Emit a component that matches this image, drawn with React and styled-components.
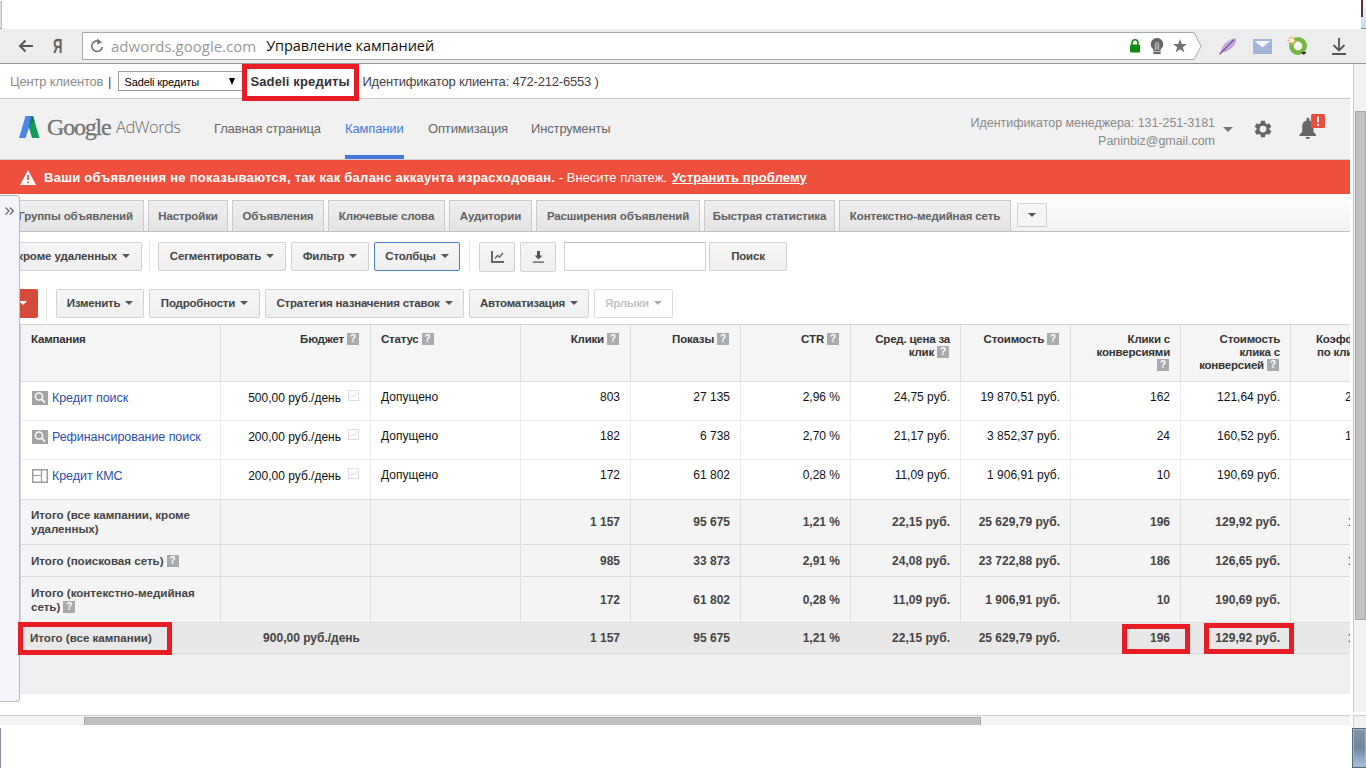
import React from "react";
import styled, { createGlobalStyle, css } from "styled-components";

const GlobalStyle = createGlobalStyle`
  * { box-sizing: border-box; }
  body {
    margin: 0;
    width: 1366px;
    height: 768px;
    overflow: hidden;
    background: #fff;
    font-family: "Liberation Sans", Arial, sans-serif;
    font-size: 12px;
    color: #000;
  }
`;

const Screen = styled.div`
  position: relative;
  width: 1366px;
  height: 768px;
  display: flex;
  flex-direction: column;
  overflow: hidden;
  background: #fff;
`;

const Label = styled.span`
  white-space: nowrap;
  letter-spacing: ${(p) => p.$ls || 0}px;
`;

/* browser chrome */

const TabStrip = styled.div`
  height: 29px;
  flex: none;
  display: flex;
  justify-content: space-between;
`;

const LeftSliver = styled.div`
  width: 2px;
  height: 28px;
  margin-top: 1px;
  background: #dde0e4;
  border-right: 1px solid #b8bcc2;
  border-bottom: 1px solid #999;
`;

const RightSliver = styled.div`
  width: 5px;
  height: 29px;
  background: linear-gradient(#fff 0, #dce8f5 55%, #c3d8ee 100%);
  border-bottom: 1px solid #8b9299;
`;

const RedMark = styled.div`
  width: 2px;
  height: 17px;
  background: #5d3434;
`;

const AddressRow = styled.div`
  height: 35px;
  flex: none;
  display: flex;
  align-items: center;
  background: #ededed;
  border-bottom: 1px solid #979797;
  color: #555;
  padding-left: 18px;
`;

const YandexMark = styled.span`
  width: 14px;
  margin: 0 15px 0 19px;
  font-size: 21px;
  font-weight: bold;
  line-height: 34px;
  color: #606060;
  transform: scaleX(0.62);
  transform-origin: left;
`;

const Omnibox = styled.div`
  position: relative;
  width: 1120px;
  height: 28px;
  display: flex;
  align-items: center;
  padding-left: 8px;
`;

const OmniboxShape = styled.svg`
  position: absolute;
  left: 0;
  top: 0;
`;

const Url = styled.div`
  position: relative;
  display: flex;
  font-family: "Open Sans", "Noto Sans", sans-serif;
  font-size: 15px;
  line-height: 26px;
  color: #999;
  margin-left: 7px;
  width: 1018px;
`;

const PageTitle = styled.span`
  margin-left: 10px;
  color: #111;
  font-size: 14.5px;
  white-space: nowrap;
  letter-spacing: -0.05px;
`;

const OmniIcons = styled.div`
  position: relative;
  display: flex;
  align-items: center;
  gap: 9px;
`;

const Extensions = styled.div`
  display: flex;
  align-items: center;
  margin-left: 17px;
`;

const ExtIcon = styled.svg`
  position: relative;
  flex: none;
  margin-right: ${(p) => p.$gap || 0}px;
`;

/* page */

const Viewport = styled.div`
  height: 664px;
  display: flex;
`;

const Page = styled.div`
  width: 1350px;
  flex: none;
  overflow: hidden;
`;

const ClientBar = styled.div`
  height: 35px;
  display: flex;
  align-items: center;
  border-bottom: 1px solid #c9c9c9;
  padding-left: 10px;
  font-size: 13px;
  line-height: 33px;
  color: #4a4046;
`;

const Muted = styled(Label)`
  color: #8c8c8c;
  width: 98px;
`;

const ClientSelect = styled.div`
  width: 125px;
  height: 20px;
  margin-left: 7px;
  border: 1px solid #9a9a9a;
  display: flex;
  align-items: center;
  justify-content: space-between;
  padding: 1px 7px 0 5px;
  font-size: 11px;
  line-height: 18px;
  color: #000;
  background: #fff;
`;

const ClientName = styled(Label)`
  font-weight: bold;
  color: #333;
  width: 119px;
  padding-left: 7px;
`;

const Header = styled.div`
  height: 61px;
  display: flex;
  background: #f1f1f1;
  border-bottom: 1px solid #cfcfcf;
`;

const Brand = styled.div`
  width: 214px;
  height: 59px;
  display: flex;
  align-items: center;
  padding-left: 19px;
  color: #737373;
  svg { margin-bottom: 4px; }
`;

const Google = styled.span`
  font-family: "Liberation Serif", "Times New Roman", serif;
  font-size: 24px;
  line-height: 30px;
  margin: 0 0 3px 7px;
  width: 62px;
  letter-spacing: -1.2px;
  -webkit-text-stroke: 0.3px #737373;
`;

const AdWords = styled.span`
  font-family: "Open Sans", sans-serif;
  font-weight: 300;
  font-size: 16.5px;
  line-height: 28px;
  margin: 0 0 3px 7px;
  color: #6c6c6c;
  letter-spacing: -0.5px;
`;

const Nav = styled.div`
  display: flex;
  gap: 24px;
`;

const NavItem = styled.div`
  width: ${(p) => p.$w}px;
  height: 60px;
  line-height: 59px;
  font-size: 13px;
  white-space: nowrap;
  letter-spacing: -0.14px;
  color: ${(p) => (p.$active ? "#4579dc" : "#666")};
  border-bottom: ${(p) => (p.$active ? "4px solid #4579dc" : "0")};
`;

const Account = styled.div`
  margin-left: auto;
  padding-top: 15px;
  text-align: right;
  font-size: 12.5px;
  line-height: 18px;
  letter-spacing: -0.04px;
  color: #8a8a8a;
`;

const HeaderIcons = styled.div`
  display: flex;
  align-items: center;
  width: 135px;
  padding-left: 8px;
`;

const Alert = styled.div`
  height: 34px;
  display: flex;
  align-items: center;
  padding: 0 0 0 20px;
  background: #ef4f3d;
  color: #fff;
  font-size: 13px;
  white-space: nowrap;
  svg { margin-right: 8px; }
`;

const AlertText = styled.b`
  letter-spacing: 0.26px;
`;

const AlertLink = styled.span`
  font-weight: bold;
  text-decoration: underline;
  margin-left: 5px;
  letter-spacing: 0.1px;
`;

const Body = styled.div`
  display: flex;
  height: 521px;
  padding-top: 1px;
`;

const SidePanel = styled.div`
  width: 20px;
  height: 507px;
  flex: none;
  background: #f4f5fa;
  border: 1px solid #b9b9bf;
  border-left: 0;
  border-radius: 0 4px 4px 0;
  padding: 8px 0 0 5px;
`;

const Main = styled.div`
  width: 1330px;
  flex: none;
  overflow: hidden;
`;

const Tabs = styled.div`
  height: 37px;
  display: flex;
  align-items: flex-end;
  gap: 4px;
  border-bottom: 1px solid #bfbfbf;
  background: linear-gradient(#fff, #f1f1f1);
`;

const Tab = styled.div`
  width: ${(p) => p.$w}px;
  height: 31px;
  flex: none;
  border: 1px solid #cacaca;
  border-bottom: 0;
  background: linear-gradient(#efefef, #e4e4e4);
  color: #606060;
  font-weight: bold;
  font-size: 11.5px;
  letter-spacing: -0.13px;
  line-height: 30px;
  display: flex;
  justify-content: ${(p) => (p.$cut ? "flex-end" : "center")};
  padding-right: ${(p) => (p.$cut ? 10 : 0)}px;
  border-left-width: ${(p) => (p.$cut ? 0 : 1)}px;
  overflow: hidden;
  white-space: nowrap;
`;

const MoreTabs = styled.div`
  width: 30px;
  height: 24px;
  margin: 0 0 4px 2px;
  border: 1px solid #d3d3d3;
  background: #f5f5f5;
  display: flex;
  align-items: center;
  justify-content: center;
`;

const Toolbar = styled.div`
  display: flex;
  align-items: flex-start;
  padding-top: ${(p) => p.$top}px;
  height: ${(p) => p.$h}px;
`;

const Button = styled.div`
  width: ${(p) => p.$w}px;
  height: ${(p) => p.$h || 29}px;
  flex: none;
  margin-left: ${(p) => p.$ml || 0}px;
  border: 1px solid #d2d2d2;
  border-radius: 2px;
  background: linear-gradient(#f6f6f6, #efefef);
  color: #444;
  font-weight: bold;
  font-size: 11.5px;
  letter-spacing: -0.2px;
  line-height: 26px;
  padding-bottom: 1px;
  display: flex;
  align-items: center;
  justify-content: center;
  gap: 5px;
  white-space: nowrap;
  ${(p) => p.$kind === "cut" && css`
    border-left: 0;
    border-radius: 0 2px 2px 0;
    justify-content: flex-end;
    padding-right: 11px;
    letter-spacing: -0.1px;
    overflow: hidden;
  `}
  ${(p) => p.$kind === "active" && css`border-color: #4d7fc9;`}
  ${(p) => p.$kind === "disabled" && css`
    background: #fff;
    border-color: #dcdcdc;
    color: #c4c4c4;
  `}
  ${(p) => p.$kind === "red" && css`
    background: #d54a38;
    border: 0;
    border-radius: 0 2px 2px 0;
    justify-content: flex-start;
    i { margin-left: -1px; }
  `}
`;

const Separator = styled.div`
  width: 1px;
  height: ${(p) => p.$h}px;
  margin-left: ${(p) => p.$ml}px;
  background: #e6e6e6;
`;

const SearchInput = styled.div`
  width: 142px;
  height: 29px;
  margin-left: 8px;
  border: 1px solid #d3d3d3;
  border-top-color: #b9b9b9;
`;

const Caret = styled.i`
  flex: none;
  width: 0;
  height: 0;
  border: 4px solid transparent;
  border-bottom: 0;
  border-top-color: ${(p) => p.$color || "#555"};
`;

/* campaign table */

const Row = styled.div`
  display: grid;
  grid-template-columns: 201px 150px 150px repeat(8, 110px);
  height: ${(p) => p.$h}px;
  border-bottom: 1px solid ${(p) => p.$line || "#dcdcdc"};
  background: ${(p) => p.$bg || "#fff"};
`;

const HeadRow = styled(Row)`
  border-top: 1px solid #d4d4d4;
`;

const Cell = styled.div`
  display: flex;
  align-items: ${(p) => (p.$mid ? "center" : "flex-start")};
  justify-content: ${(p) => (p.$left ? "flex-start" : "flex-end")};
  text-align: ${(p) => (p.$left ? "left" : "right")};
  padding: ${(p) => p.$pt || 0}px 10px 0;
  border-right: 1px solid ${(p) => p.$line || "#dcdcdc"};
  border-left: ${(p) => (p.$first ? "1px solid #d4d4d4" : "0")};
  line-height: 14px;
  color: #111;
  white-space: nowrap;
`;

const HeadCell = styled(Cell)`
  padding-top: 8px;
  line-height: 13px;
  font-size: 11.5px;
  font-weight: bold;
  letter-spacing: -0.2px;
  color: #333;
`;

const TotalCell = styled(Cell)`
  font-weight: bold;
  color: #444;
`;

const TotalName = styled(TotalCell)`
  font-size: 11.6px;
  letter-spacing: -0.02px;
  padding-left: ${(p) => (p.$all ? 9 : 10)}px;
`;

const Clipped = styled.div`
  padding-left: ${(p) => p.$pl}px;
`;

const Campaign = styled.div`
  display: flex;
  align-items: center;
  gap: 4px;
  padding-left: 1px;
  color: #2c4fae;
  font-size: 12.5px;
  letter-spacing: -0.06px;
`;

const Budget = styled.div`
  display: flex;
  align-items: center;
  gap: 7px;
  padding-right: 1px;
  svg { margin-bottom: 5px; }
`;

const Help = styled.span`
  display: inline-block;
  width: 12px;
  height: 12px;
  margin: 0 1px 0 3px;
  background: #aaa;
  color: #fff;
  font-size: 10px;
  font-weight: bold;
  line-height: 12px;
  text-align: center;
  letter-spacing: 0;
  vertical-align: 1px;
`;

const TextLine = styled.div`
  height: ${(p) => p.$h}px;
`;

const TableFoot = styled.div`
  height: 40px;
  background: #efefef;
`;

/* scrollbars and desktop edge */

const ScrollColumn = styled.div`
  width: 13px;
  margin-left: 3px;
  display: flex;
  flex-direction: column;
  gap: 3px;
`;

const VScroll = styled.div`
  height: 648px;
  background: #f2f2f2;
  border-left: 1px solid #c8c8c8;
  padding-top: 47px;
`;

const VThumb = styled.div`
  width: 11px;
  margin-left: 1px;
  height: 509px;
  background: #c1c1c1;
  border: 1px solid #a8a8a8;
`;

const ScrollCorner = styled.div`
  height: 13px;
  background: #f2f2f2;
  border: 1px solid #cdcdcd;
  border-width: 1px 0 0 1px;
`;

const HScroll = styled.div`
  height: 10px;
  background: #f3f3f3;
  border-top: 1px solid #cdcdcd;
  padding: 1px 0 0 84px;
`;

const HThumb = styled.div`
  width: 897px;
  height: 8px;
  background: #c1c1c1;
  border: 1px solid #a8a8a8;
  border-bottom: 0;
`;

const Desktop = styled.div`
  height: 40px;
  display: flex;
  justify-content: space-between;
`;

const DesktopLeft = styled.div`
  width: 1px;
  background: #8490a2;
`;

const DesktopRight = styled.div`
  width: 14px;
  background: linear-gradient(#8395a5, #7086a0 50%, #a9c2df);
  border: 1px solid #566b80;
  border-right: 0;
  box-shadow: inset 0 0 0 1px #a6b5c6;
`;

const Mark = styled.div`
  position: absolute;
  left: ${(p) => p.$x}px;
  top: ${(p) => p.$y}px;
  width: ${(p) => p.$w}px;
  height: ${(p) => p.$h}px;
  border: 5px solid #e81c24;
`;

const tabs = [
  { text: "Группы объявлений", w: 124, cut: true },
  { text: "Настройки", w: 80 },
  { text: "Объявления", w: 92 },
  { text: "Ключевые слова", w: 117 },
  { text: "Аудитории", w: 83 },
  { text: "Расширения объявлений", w: 164 },
  { text: "Быстрая статистика", w: 131 },
  { text: "Контекстно-медийная сеть", w: 172 },
];

const columns = [
  { lines: ["Кампания"], left: true },
  { lines: ["Бюджет"], help: true },
  { lines: ["Статус"], left: true, help: true },
  { lines: ["Клики"], help: true },
  { lines: ["Показы"], help: true },
  { lines: ["CTR"], help: true },
  { lines: ["Сред. цена за", "клик"], help: true },
  { lines: ["Стоимость"], help: true },
  { lines: ["Клики с", "конверсиями", ""], help: true },
  { lines: ["Стоимость", "клика с", "конверсией"], help: true },
];

const campaigns = [
  { name: "Кредит поиск", kind: "search", budget: "500,00 руб./день", values: ["803", "27 135", "2,96 %", "24,75 руб.", "19 870,51 руб.", "162", "121,64 руб."], last: "2" },
  { name: "Рефинансирование поиск", kind: "search", budget: "200,00 руб./день", values: ["182", "6 738", "2,70 %", "21,17 руб.", "3 852,37 руб.", "24", "160,52 руб."], last: "1" },
  { name: "Кредит КМС", kind: "display", budget: "200,00 руб./день", values: ["172", "61 802", "0,28 %", "11,09 руб.", "1 906,91 руб.", "10", "190,69 руб."], last: "" },
];

const totals = [
  { lines: ["Итого (все кампании, кроме", "удаленных)"], h: 45, values: ["1 157", "95 675", "1,21 %", "22,15 руб.", "25 629,79 руб.", "196", "129,92 руб."], last: "1" },
  { lines: ["Итого (поисковая сеть)"], help: true, h: 32, values: ["985", "33 873", "2,91 %", "24,08 руб.", "23 722,88 руб.", "186", "126,65 руб."], last: "1" },
  { lines: ["Итого (контекстно-медийная", "сеть)"], help: true, h: 46, values: ["172", "61 802", "0,28 %", "11,09 руб.", "1 906,91 руб.", "10", "190,69 руб."], last: "" },
  { lines: ["Итого (все кампании)"], h: 31, all: true, budget: "900,00 руб./день", values: ["1 157", "95 675", "1,21 %", "22,15 руб.", "25 629,79 руб.", "196", "129,92 руб."], last: "1" },
];

const Lines = ({ lines, help, h }) => (
  <div>
    {lines.map((line, i) => (
      <TextLine key={i} $h={h}>
        {line}
        {help && i === lines.length - 1 && <Help>?</Help>}
      </TextLine>
    ))}
  </div>
);

const CampaignIcon = ({ kind }) =>
  kind === "search" ? (
    <svg width="16" height="14" viewBox="0 0 16 14">
      <rect width="16" height="14" fill="#a3a3a3" />
      <circle cx="7" cy="5.5" r="3.6" fill="none" stroke="#fff" strokeWidth="1.5" />
      <path d="M9.6 8.200L13 11.600" stroke="#fff" strokeWidth="1.800" />
    </svg>
  ) : (
    <svg width="16" height="14" viewBox="0 0 16 14" fill="none" stroke="#9c9c9c">
      <rect x=".75" y=".75" width="14.5" height="12.5" strokeWidth="1.5" />
      <path d="M9.5 1v12M1 6.500h8.500" strokeWidth="1.200" />
    </svg>
  );

const BudgetIcon = () => (
  <svg width="11" height="11" viewBox="0 0 11 11" fill="none" stroke="#dedede">
    <rect x=".5" y=".5" width="10" height="10" />
    <path d="M2 8l2-2.500 2 1.500 3-4" />
  </svg>
);

const BrowserBar = () => (
  <AddressRow>
    <svg width="16" height="14" viewBox="0 0 16 14" fill="none" stroke="#555" strokeWidth="2">
      <path d="M15 7H2M7.500 1.500L2 7l5.500 5.500" />
    </svg>
    <YandexMark>Я</YandexMark>
    <Omnibox>
      <OmniboxShape width="1120" height="28" viewBox="0 0 1120 28">
        <path d="M.5 .5H1112l7 13.500-7 13.500H.5z" fill="#fff" stroke="#a9a9a9" />
      </OmniboxShape>
      <ExtIcon width="14" height="16" viewBox="0 0 14 16">
        <path d="M9.800 3.600A5.300 5.300 0 1 0 12.300 9" fill="none" stroke="#777" strokeWidth="1.700" />
        <path d="M7.200 .5v6L12.200 4.500z" fill="#777" />
      </ExtIcon>
      <Url>
        <Label>adwords.google.com</Label>
        <PageTitle>Управление кампанией</PageTitle>
      </Url>
      <OmniIcons>
        <svg width="12" height="14" viewBox="0 0 12 14">
          <path d="M3 6V3.800a3 3 0 0 1 6 0V6" fill="none" stroke="#118c11" strokeWidth="1.600" />
          <rect x="1" y="5.500" width="10" height="8" rx="1" fill="#118c11" />
        </svg>
        <svg width="14" height="17" viewBox="0 0 14 17">
          <path d="M7 0a6.300 6.300 0 0 0-3.600 11.400V16h7.200v-4.600A6.300 6.300 0 0 0 7 0z" fill="#666" />
          <path d="M5.300 12V6.200a1.700 1.700 0 0 1 3.400 0V12M7 6v6M3 13.500h8" fill="none" stroke="#ddd" strokeWidth=".8" />
        </svg>
        <svg width="14" height="14" viewBox="0 0 14 14">
          <path d="M7 0l1.800 5H14L9.800 8.200 11.400 13.500 7 10.300 2.600 13.500 4.200 8.200 0 5h5.200z" fill="#707070" />
        </svg>
      </OmniIcons>
    </Omnibox>
    <Extensions>
      <ExtIcon $gap={16} width="18" height="18" viewBox="0 0 18 18">
        <path d="M1.500 16C2.500 8.500 7 3.500 16.800 .8 16.500 7 12.500 12.500 4 14.800z" fill="#c9ade0" />
        <path d="M.8 17.300C4.500 12.500 10 8.500 15 2.500" fill="none" stroke="#7c519f" strokeWidth="1.400" />
        <path d="M4 14.800c8-2.200 12-7 12.600-12" fill="none" stroke="#9a74ba" strokeWidth=".8" />
      </ExtIcon>
      <ExtIcon $gap={15} width="19" height="15" viewBox="0 0 19 15">
        <rect width="19" height="15" fill="#a4b5dc" />
        <path d="M1.500 2L9.500 8.500 17.500 2z" fill="#f3f5fb" />
      </ExtIcon>
      <ExtIcon $gap={24} width="21" height="20" viewBox="0 0 21 20">
        <circle cx="11" cy="10" r="6.700" fill="#f4f6f1" stroke="#76b843" strokeWidth="4.600" />
        <path d="M5 0v9M.5 4.500h9M2 1.500l6 6M8 1.500l-6 6" stroke="#e2b268" strokeWidth="1.100" />
        <circle cx="5" cy="4.500" r="2.300" fill="#fff4cf" />
        <path d="M14 16h5.500l-2.700 3z" fill="#222" />
      </ExtIcon>
      <ExtIcon width="14" height="17" viewBox="0 0 14 17" fill="none" stroke="#555" strokeWidth="1.800">
        <path d="M7 0v12M1.500 7L7 12.500 12.500 7M0 16h14" />
      </ExtIcon>
    </Extensions>
  </AddressRow>
);

const PageHeader = () => (
  <Header>
    <Brand>
      <svg width="21" height="22" viewBox="0 0 21 22">
        <path d="M6.500 0H14L6.500 22H0z" fill="#4a86ea" />
        <path d="M12.500 0H14l6.500 22H13L9.800 11z" fill="#149a59" />
        <path d="M12.500 0H14l1.500 5-3.500 3-2 3.500z" fill="#1a7a50" />
      </svg>
      <Google>Google</Google>
      <AdWords>AdWords</AdWords>
    </Brand>
    <Nav>
      <NavItem $w={107}>Главная страница</NavItem>
      <NavItem $w={59} $active>Кампании</NavItem>
      <NavItem $w={79}>Оптимизация</NavItem>
      <NavItem $w={80}>Инструменты</NavItem>
    </Nav>
    <Account>
      <div>Идентификатор менеджера: 131-251-3181</div>
      <div>Paninbiz@gmail.com</div>
    </Account>
    <HeaderIcons>
      <svg width="10" height="5" viewBox="0 0 10 5"><path d="M0 0h10L5 5z" fill="#777" /></svg>
      <svg width="18" height="18" viewBox="0 0 24 24" style={{ marginLeft: 21 }}>
        <path fill="#666" fillRule="evenodd" d="M9.300 1h5.400l.6 3.300 2 1.200 3.200-1.200L23.200 9l-2.600 2.100v1.800l2.600 2.100-2.700 4.700-3.200-1.200-2 1.200-.6 3.300H9.300l-.6-3.300-2-1.200-3.200 1.200L.8 15l2.600-2.100v-1.800L.8 9l2.700-4.700 3.200 1.200 2-1.200zM12 7.500a4.500 4.500 0 1 0 0 9 4.500 4.500 0 0 0 0-9z" />
      </svg>
      <svg width="28" height="28" viewBox="0 0 28 28" style={{ marginLeft: 26, marginTop: -4 }}>
        <path d="M1.500 23h16.500v-1.500l-2.500-2.500V13c0-3-1.500-5-4-5.600V6a1.500 1.500 0 0 0-3 0v1.400C6 8 4.200 10 4.200 13v6l-2.700 2.500zM7.500 24h4.500a2.250 2 0 0 1-4.500 0z" fill="#666" />
        <rect x="13" y="1" width="14" height="14" rx="1.500" fill="#ec4c3b" />
        <path d="M20 3.500v6M20 11v2" stroke="#fff" strokeWidth="2" />
      </svg>
    </HeaderIcons>
  </Header>
);

const CampaignTable = () => (
  <>
    <HeadRow $h={58} $bg="#f5f5f5">
      {columns.map((col, i) => (
        <HeadCell key={i} $first={i === 0} $left={col.left}>
          <Lines lines={col.lines} help={col.help} h={13} />
        </HeadCell>
      ))}
      <HeadCell $left>
        <div>
          <Clipped $pl={15}>Коэффициент</Clipped>
          <Clipped $pl={16}>по кликам</Clipped>
        </div>
      </HeadCell>
    </HeadRow>
    {campaigns.map((c, n) => (
      <Row key={c.name} $h={n === 2 ? 40 : 39} $line={n === 2 ? "#d9d9d9" : "#ececec"}>
        <Cell $first $left $pt={9} $line="#ececec">
          <Campaign><CampaignIcon kind={c.kind} />{c.name}</Campaign>
        </Cell>
        <Cell $pt={8} $line="#ececec">
          <Budget>{c.budget}<BudgetIcon /></Budget>
        </Cell>
        <Cell $left $pt={8} $line="#ececec">Допущено</Cell>
        {c.values.map((v, i) => <Cell key={i} $pt={8} $line="#ececec">{v}</Cell>)}
        <Cell $left $pt={8} $line="#ececec"><Clipped $pl={44}>{c.last}</Clipped></Cell>
      </Row>
    ))}
    {totals.map((t) => {
      const line = t.all ? "transparent" : "#dedede";
      return (
        <Row key={t.lines[0]} $h={t.h} $bg={t.all ? "#e8e8e8" : "#f4f4f4"}>
          <TotalName $first $left $mid $all={t.all} $line={line}>
            <Lines lines={t.lines} help={t.help} h={14} />
          </TotalName>
          <TotalCell $mid $line={line}>{t.budget}</TotalCell>
          <TotalCell $line={line} />
          {t.values.map((v, i) => <TotalCell key={i} $mid $line={line}>{v}</TotalCell>)}
          <TotalCell $left $mid><Clipped $pl={47}>{t.last}</Clipped></TotalCell>
        </Row>
      );
    })}
    <TableFoot />
  </>
);

export default function App() {
  return (
    <Screen>
      <GlobalStyle />
      <TabStrip>
        <LeftSliver />
        <RightSliver><RedMark /></RightSliver>
      </TabStrip>
      <BrowserBar />
      <Viewport>
        <Page>
          <ClientBar>
            <Muted $ls={-0.18}>Центр клиентов</Muted>
            <span>|</span>
            <ClientSelect>
              <Label $ls={-0.1}>Sadeli кредиты</Label>
              <svg width="6" height="7" viewBox="0 0 6 7"><path d="M0 0h6L3 7z" /></svg>
            </ClientSelect>
            <ClientName $ls={0.15}>Sadeli кредиты</ClientName>
            <Label $ls={-0.2}>Идентификатор клиента: 472-212-6553 )</Label>
          </ClientBar>
          <PageHeader />
          <Alert>
            <svg width="16" height="15" viewBox="0 0 16 15">
              <path d="M8 0l8 15H0z" fill="#fff" />
              <path d="M8 5v5M8 11.500v1.800" stroke="#ef4f3d" strokeWidth="1.800" />
            </svg>
            <AlertText>Ваши объявления не показываются, так как баланс аккаунта израсходован.</AlertText>
            <Label>&nbsp;- Внесите платеж.</Label>
            <AlertLink>Устранить проблему</AlertLink>
          </Alert>
          <Body>
            <SidePanel>
              <svg width="9" height="8" viewBox="0 0 9 8" fill="none" stroke="#666" strokeWidth="1.200">
                <path d="M.5 .5L4 4 .5 7.500M4.800 .5L8.300 4 4.800 7.500" />
              </svg>
            </SidePanel>
            <Main>
              <Tabs>
                {tabs.map((t) => <Tab key={t.text} $w={t.w} $cut={t.cut}>{t.text}</Tab>)}
                <MoreTabs><Caret /></MoreTabs>
              </Tabs>
              <Toolbar $top={10} $h={57}>
                <Button $w={122} $kind="cut">кроме удаленных<Caret /></Button>
                <Separator $ml={7} $h={29} />
                <Button $w={128} $ml={8}>Сегментировать<Caret /></Button>
                <Button $w={78} $ml={5}>Фильтр<Caret /></Button>
                <Button $w={86} $ml={5} $kind="active">Столбцы<Caret /></Button>
                <Separator $ml={9} $h={29} />
                <Button $w={36} $h={30} $ml={9}>
                  <svg width="13" height="12" viewBox="0 0 13 12" fill="none" stroke="#666">
                    <path d="M1 0v11h12" strokeWidth="2" />
                    <path d="M4 7.500l2.500-3 2 1.500L12 2" strokeWidth="1.400" />
                  </svg>
                </Button>
                <Button $w={36} $h={30} $ml={5}>
                  <svg width="11" height="12" viewBox="0 0 11 12" fill="#555">
                    <path d="M4 0h3v4.500h2.500l-4 4-4-4H4zM0 10.500h11v1.300H0z" />
                  </svg>
                </Button>
                <SearchInput />
                <Button $w={78} $ml={3}>Поиск</Button>
              </Toolbar>
              <Toolbar $top={0} $h={35}>
                <Button $w={18} $kind="red"><Caret $color="#fff" /></Button>
                <Separator $ml={8} $h={33} />
                <Button $w={88} $ml={9}>Изменить<Caret /></Button>
                <Button $w={111} $ml={5}>Подробности<Caret /></Button>
                <Button $w={199} $ml={5}>Стратегия назначения ставок<Caret /></Button>
                <Button $w={120} $ml={5}>Автоматизация<Caret /></Button>
                <Button $w={79} $ml={5} $kind="disabled">Ярлыки<Caret $color="#aaa" /></Button>
              </Toolbar>
              <CampaignTable />
            </Main>
          </Body>
          <HScroll><HThumb /></HScroll>
        </Page>
        <ScrollColumn>
          <VScroll><VThumb /></VScroll>
          <ScrollCorner />
        </ScrollColumn>
      </Viewport>
      <Desktop>
        <DesktopLeft />
        <DesktopRight />
      </Desktop>
      <Mark $x={242} $y={64} $w={117} $h={37} />
      <Mark $x={18} $y={622} $w={154} $h={33} />
      <Mark $x={1122} $y={624} $w={68} $h={30} />
      <Mark $x={1204} $y={623} $w={90} $h={31} />
    </Screen>
  );
}
